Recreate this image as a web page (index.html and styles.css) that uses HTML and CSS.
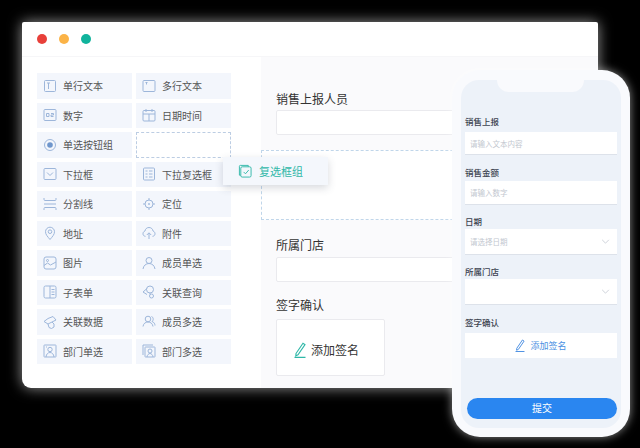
FILE: index.html
```html
<!DOCTYPE html>
<html lang="zh-CN">
<head>
    <meta charset="UTF-8">
    <title>表单设计</title>
    <link rel="stylesheet" href="styles.css">
</head>
<body>
    <div class="window">
        <div class="titlebar">
            <span class="dot red"></span>
            <span class="dot yellow"></span>
            <span class="dot green"></span>
        </div>
        <div class="main">
            <div class="sidebar">
                <div class="widget"><svg class="icon" viewBox="0 0 14 14"><rect x="1.5" y="1.5" width="11" height="11" rx="1"/><path d="M4 4h3M5.500 4v6"/></svg>单行文本</div>
                <div class="widget"><svg class="icon" viewBox="0 0 14 14"><rect x="1" y="1.500" width="12" height="11" rx="1"/><path d="M3.500 3.500h2M4.500 3.500v2"/></svg>多行文本</div>
                <div class="widget"><svg class="icon" viewBox="0 0 14 14"><rect x="1" y="1.500" width="12" height="11" rx="1"/><path d="M3.500 5.500h2.500v3h-2.500zM8 5.500h2.500v1.500h-2.500v1.500h2.500"/></svg>数字</div>
                <div class="widget"><svg class="icon" viewBox="0 0 14 14"><rect x="1" y="2.500" width="12" height="10.500" rx="1"/><path d="M1 6h12M4 1v3M10 1v3M7 6v7"/></svg>日期时间</div>
                <div class="widget"><svg class="icon" viewBox="0 0 14 14"><circle cx="7" cy="7" r="5.500"/><circle class="fill" cx="7" cy="7" r="2.800"/></svg>单选按钮组</div>
                <div class="widget slot"></div>
                <div class="widget"><svg class="icon" viewBox="0 0 14 14"><rect x="1" y="1.500" width="12" height="11" rx="1"/><path d="M4 5.500l3 3 3-3"/></svg>下拉框</div>
                <div class="widget"><svg class="icon" viewBox="0 0 14 14"><rect x="1.500" y="1" width="11" height="12" rx="1"/><path d="M3.500 4h2M7 4h3.500M3.500 7h2M7 7h3.500M3.500 10h2M7 10h3.500"/></svg>下拉复选框</div>
                <div class="widget"><svg class="icon" viewBox="0 0 14 14"><path d="M1 1v1.500q0 1 1 1h10q1 0 1-1V1M1 7h12M1 13v-1.500q0-1 1-1h10q1 0 1 1V13"/></svg>分割线</div>
                <div class="widget"><svg class="icon" viewBox="0 0 14 14"><circle cx="7" cy="7" r="4"/><circle class="fill" cx="7" cy="7" r="0.800"/><path d="M7 1v2M7 11v2M1 7h2M11 7h2"/></svg>定位</div>
                <div class="widget"><svg class="icon" viewBox="0 0 14 14"><path d="M7 13.500C4.500 10.500 2.500 8.500 2.500 5.700a4.500 4.500 0 0 1 9 0c0 2.800-2 4.800-4.500 7.800z"/><circle cx="7" cy="5.700" r="1.800"/></svg>地址</div>
                <div class="widget"><svg class="icon" viewBox="0 0 14 14"><path d="M3.500 10.300C2 10.300 1 9.200 1 7.800S1.700 5.500 3 5c.2-1.700 1.500-3.500 4-3.500S10.800 3.300 11 5c1.300.5 2 1.500 2 2.800s-1 2.500-2.500 2.500M7 13V7M4.800 9L7 6.800 9.200 9"/></svg>附件</div>
                <div class="widget"><svg class="icon" viewBox="0 0 14 14"><rect x="1" y="1" width="12" height="12" rx="2"/><circle cx="4.500" cy="4.500" r="1"/><path d="M1 9.500l3.500-2.500 3 2 5.500-3"/></svg>图片</div>
                <div class="widget"><svg class="icon" viewBox="0 0 14 14"><circle cx="7" cy="4.500" r="3"/><path d="M1 13c.5-3.500 3-5.500 6-5.500s5.500 2 6 5.500"/></svg>成员单选</div>
                <div class="widget"><svg class="icon" viewBox="0 0 14 14"><rect x="1" y="1" width="12" height="12" rx="1.500"/><path d="M7 1v12M8.500 4.500h3M8.500 7h3M8.500 9.500h3"/></svg>子表单</div>
                <div class="widget"><svg class="icon" viewBox="0 0 14 14"><circle cx="8" cy="4.500" r="3.500"/><path d="M5 3.500L1 7l4 2.500M8 8v1.500"/><circle cx="9.500" cy="11" r="2"/></svg>关联查询</div>
                <div class="widget"><svg class="icon" viewBox="0 0 14 14"><path d="M5 3.500L1 6.500l4 2.500 8-4-3-3.500zM5 9l1 3.500 2.500 1M9 7l2 2v3l-2.500 1.500"/></svg>关联数据</div>
                <div class="widget"><svg class="icon" viewBox="0 0 14 14"><circle cx="6" cy="4" r="2.800"/><path d="M1 11.500c.4-3 2.500-4.500 5-4.500s4.600 1.500 5 4.500M9.500 1.500c1.800.5 2.500 3.500.5 5 2 .5 3 2.500 3 4"/></svg>成员多选</div>
                <div class="widget"><svg class="icon" viewBox="0 0 14 14"><rect x="1" y="1" width="12" height="12" rx="0.500"/><circle cx="7" cy="5.500" r="2.200"/><path d="M3 13c.3-3 2-4.500 4-4.500s3.700 1.500 4 4.500M3 3h1"/></svg>部门单选</div>
                <div class="widget"><svg class="icon" viewBox="0 0 14 14"><path d="M1 11V1h10"/><rect x="3" y="3" width="10" height="10" rx="0.500"/><circle cx="8" cy="7" r="2"/><path d="M5 13c.2-2 1.500-3.500 3-3.500s2.800 1.500 3 3.500"/></svg>部门多选</div>
            </div>
            <div class="form">
                <div class="form-label first">销售上报人员</div>
                <div class="form-input"></div>
                <div class="drop-zone"></div>
                <div class="form-label store">所属门店</div>
                <div class="form-input"></div>
                <div class="form-label sign">签字确认</div>
                <div class="sign-box">
                    <svg class="pen teal" viewBox="0 0 12 16"><path d="M2 11.500L9 1.200l2 1.400L4 12.800l-2.200 1zM.5 15.400h11"/></svg>添加签名
                </div>
            </div>
        </div>
    </div>

    <div class="drag-chip">
        <svg class="chip-icon" viewBox="0 0 15 15"><path d="M3 12H1.500V2.500q0-1 1-1H11V3"/><rect x="3" y="3" width="11" height="11" rx="1.500"/><path d="M6 8.500l2 2 3.500-4"/></svg>复选框组
    </div>

    <div class="phone">
        <div class="screen">
            <div class="notch"></div>
            <div class="m-label m-first">销售上报</div>
            <div class="m-input h-23">请输入文本内容</div>
            <div class="m-label m-amount">销售金额</div>
            <div class="m-input h-24">请输入数字</div>
            <div class="m-label m-date">日期</div>
            <div class="m-input h-26">请选择日期<svg class="chev" viewBox="0 0 10 6"><path d="M1 1l4 4 4-4"/></svg></div>
            <div class="m-label m-store">所属门店</div>
            <div class="m-input h-26"><svg class="chev" viewBox="0 0 10 6"><path d="M1 1l4 4 4-4"/></svg></div>
            <div class="m-label m-sign">签字确认</div>
            <div class="m-sign-box"><svg class="pen blue" viewBox="0 0 12 16"><path d="M2 11.500L9 1.200l2 1.400L4 12.800l-2.200 1zM.5 15.400h11"/></svg>添加签名</div>
            <div class="m-submit">提交</div>
        </div>
    </div>
</body>
</html>
```

FILE: styles.css
```css
* {
    box-sizing: border-box;
}

html, body {
    height: 100%;
}

body {
    margin: 0;
    width: 640px;
    height: 448px;
    overflow: hidden;
    position: relative;
    padding: 22px 42px 60px 22px;
    background: #000000;
    color: #555555;
    font-family: "Liberation Sans", "Noto Sans CJK SC", sans-serif;
}

.window {
    width: 576px;
    height: 366px;
    display: flex;
    flex-direction: column;
    background: #ffffff;
    border-radius: 2px 2px 9px 9px;
    box-shadow: 0 0 14px rgba(255, 255, 255, 0.6);
    overflow: hidden;
}

.titlebar {
    height: 35px;
    flex: none;
    display: flex;
    align-items: center;
    gap: 12px;
    padding: 0 0 0 15px;
    border-bottom: 1px solid #f6f6f8;
}

.dot {
    width: 10px;
    height: 10px;
    border-radius: 50%;
}

.red { background: #e8403a; }
.yellow { background: #fbb347; }
.green { background: #10b39c; }

.main {
    flex: 1;
    display: flex;
}

.sidebar {
    width: 239px;
    flex: none;
    padding: 16px 0 0 15px;
    display: grid;
    grid-template-columns: 95px 95px;
    grid-auto-rows: 25.5px;
    column-gap: 4px;
    row-gap: 4px;
    align-content: start;
}

.widget {
    display: flex;
    align-items: center;
    gap: 6px;
    padding-left: 6px;
    background: #f3f6fc;
    font-size: 10px;
    white-space: nowrap;
}

.slot {
    background: #ffffff;
    border: 1px dashed #bccde3;
}

.icon {
    width: 14px;
    height: 14px;
    flex: none;
    fill: none;
    stroke: #9db6da;
    stroke-width: 1;
}

.icon .fill {
    fill: #6f96cc;
    stroke: none;
}

.form {
    flex: 1;
    background: #fafafc;
    padding: 0 0 0 15px;
    position: relative;
    display: flex;
    flex-direction: column;
}

.form-label {
    font-size: 12px;
    line-height: 16px;
    color: #333333;
}

.first { margin-top: 35px; margin-bottom: 2px; }
.store { margin-top: 103px; margin-bottom: 3px; }
.sign { margin-top: 16px; margin-bottom: 5px; }

.form-input {
    height: 25px;
    margin-right: 40px;
    background: #ffffff;
    border: 1px solid #eaeaee;
    border-radius: 2px;
    flex: none;
}

.drop-zone {
    position: absolute;
    left: 0;
    right: 40px;
    top: 93px;
    height: 70px;
    background: #ffffff;
    border: 1px dashed #c0d6ea;
}

.sign-box {
    width: 109px;
    height: 57px;
    display: flex;
    align-items: center;
    padding: 4px 0 0 17px;
    gap: 5px;
    background: #ffffff;
    border: 1px solid #eaeaee;
    border-radius: 2px;
    font-size: 12px;
    color: #333333;
}

.pen {
    flex: none;
    fill: none;
    stroke-width: 1.1;
}

.pen.teal {
    width: 12px;
    height: 16px;
    stroke: #2fb8a8;
}

.pen.blue {
    width: 10px;
    height: 13px;
    stroke: #3c86e0;
}

.drag-chip {
    position: absolute;
    left: 223px;
    top: 157px;
    width: 105px;
    height: 28px;
    display: flex;
    align-items: center;
    gap: 7px;
    padding-left: 15px;
    background: #f4f7fc;
    box-shadow: 0 3px 8px rgba(60, 70, 90, 0.2);
    font-size: 11px;
    color: #2fb8a8;
}

.chip-icon {
    width: 14px;
    height: 14px;
    flex: none;
    fill: none;
    stroke: #2fb8a8;
    stroke-width: 1;
}

.phone {
    position: absolute;
    left: 452px;
    top: 70px;
    width: 178px;
    height: 367px;
    padding: 10px 9px 9px;
    background: #f9fafd;
    border-radius: 28px;
    box-shadow: 0 0 10px rgba(255, 255, 255, 0.55);
}

.screen {
    position: relative;
    height: 100%;
    padding: 0 4px;
    background: #edf2f9;
    border-radius: 18px;
    display: flex;
    flex-direction: column;
}

.notch {
    position: absolute;
    left: 36px;
    top: 0;
    width: 87px;
    height: 12px;
    background: #f9fafd;
    border-radius: 0 0 12px 12px;
}

.m-label {
    font-size: 8.5px;
    line-height: 12px;
    font-weight: 500;
    color: #3c4350;
}

.m-first { margin-top: 36px; margin-bottom: 4px; }
.m-amount { margin-top: 12px; margin-bottom: 2px; }
.m-date { margin-top: 11px; margin-bottom: 1px; }
.m-store { margin-top: 11px; margin-bottom: 1px; }
.m-sign { margin-top: 12px; margin-bottom: 4px; }

.m-input {
    flex: none;
    display: flex;
    align-items: center;
    justify-content: space-between;
    padding: 0 7px 0 5px;
    background: #ffffff;
    border-bottom: 1px solid #dde2ea;
    font-size: 7.5px;
    color: #c2c7cf;
}

.h-23 { height: 23px; }
.h-24 { height: 24px; }
.h-26 { height: 26px; }

.chev {
    width: 9px;
    height: 5px;
    margin-left: auto;
    fill: none;
    stroke: #c5cad2;
    stroke-width: 1;
}

.m-sign-box {
    height: 25px;
    flex: none;
    display: flex;
    align-items: center;
    justify-content: center;
    gap: 5px;
    background: #ffffff;
    font-size: 9px;
    color: #4a90e2;
}

.m-submit {
    margin: auto 0 9px 2px;
    height: 21px;
    width: 150px;
    flex: none;
    text-align: center;
    line-height: 21px;
    background: #2a86f0;
    border-radius: 11px;
    font-size: 10px;
    color: #ffffff;
}
```
